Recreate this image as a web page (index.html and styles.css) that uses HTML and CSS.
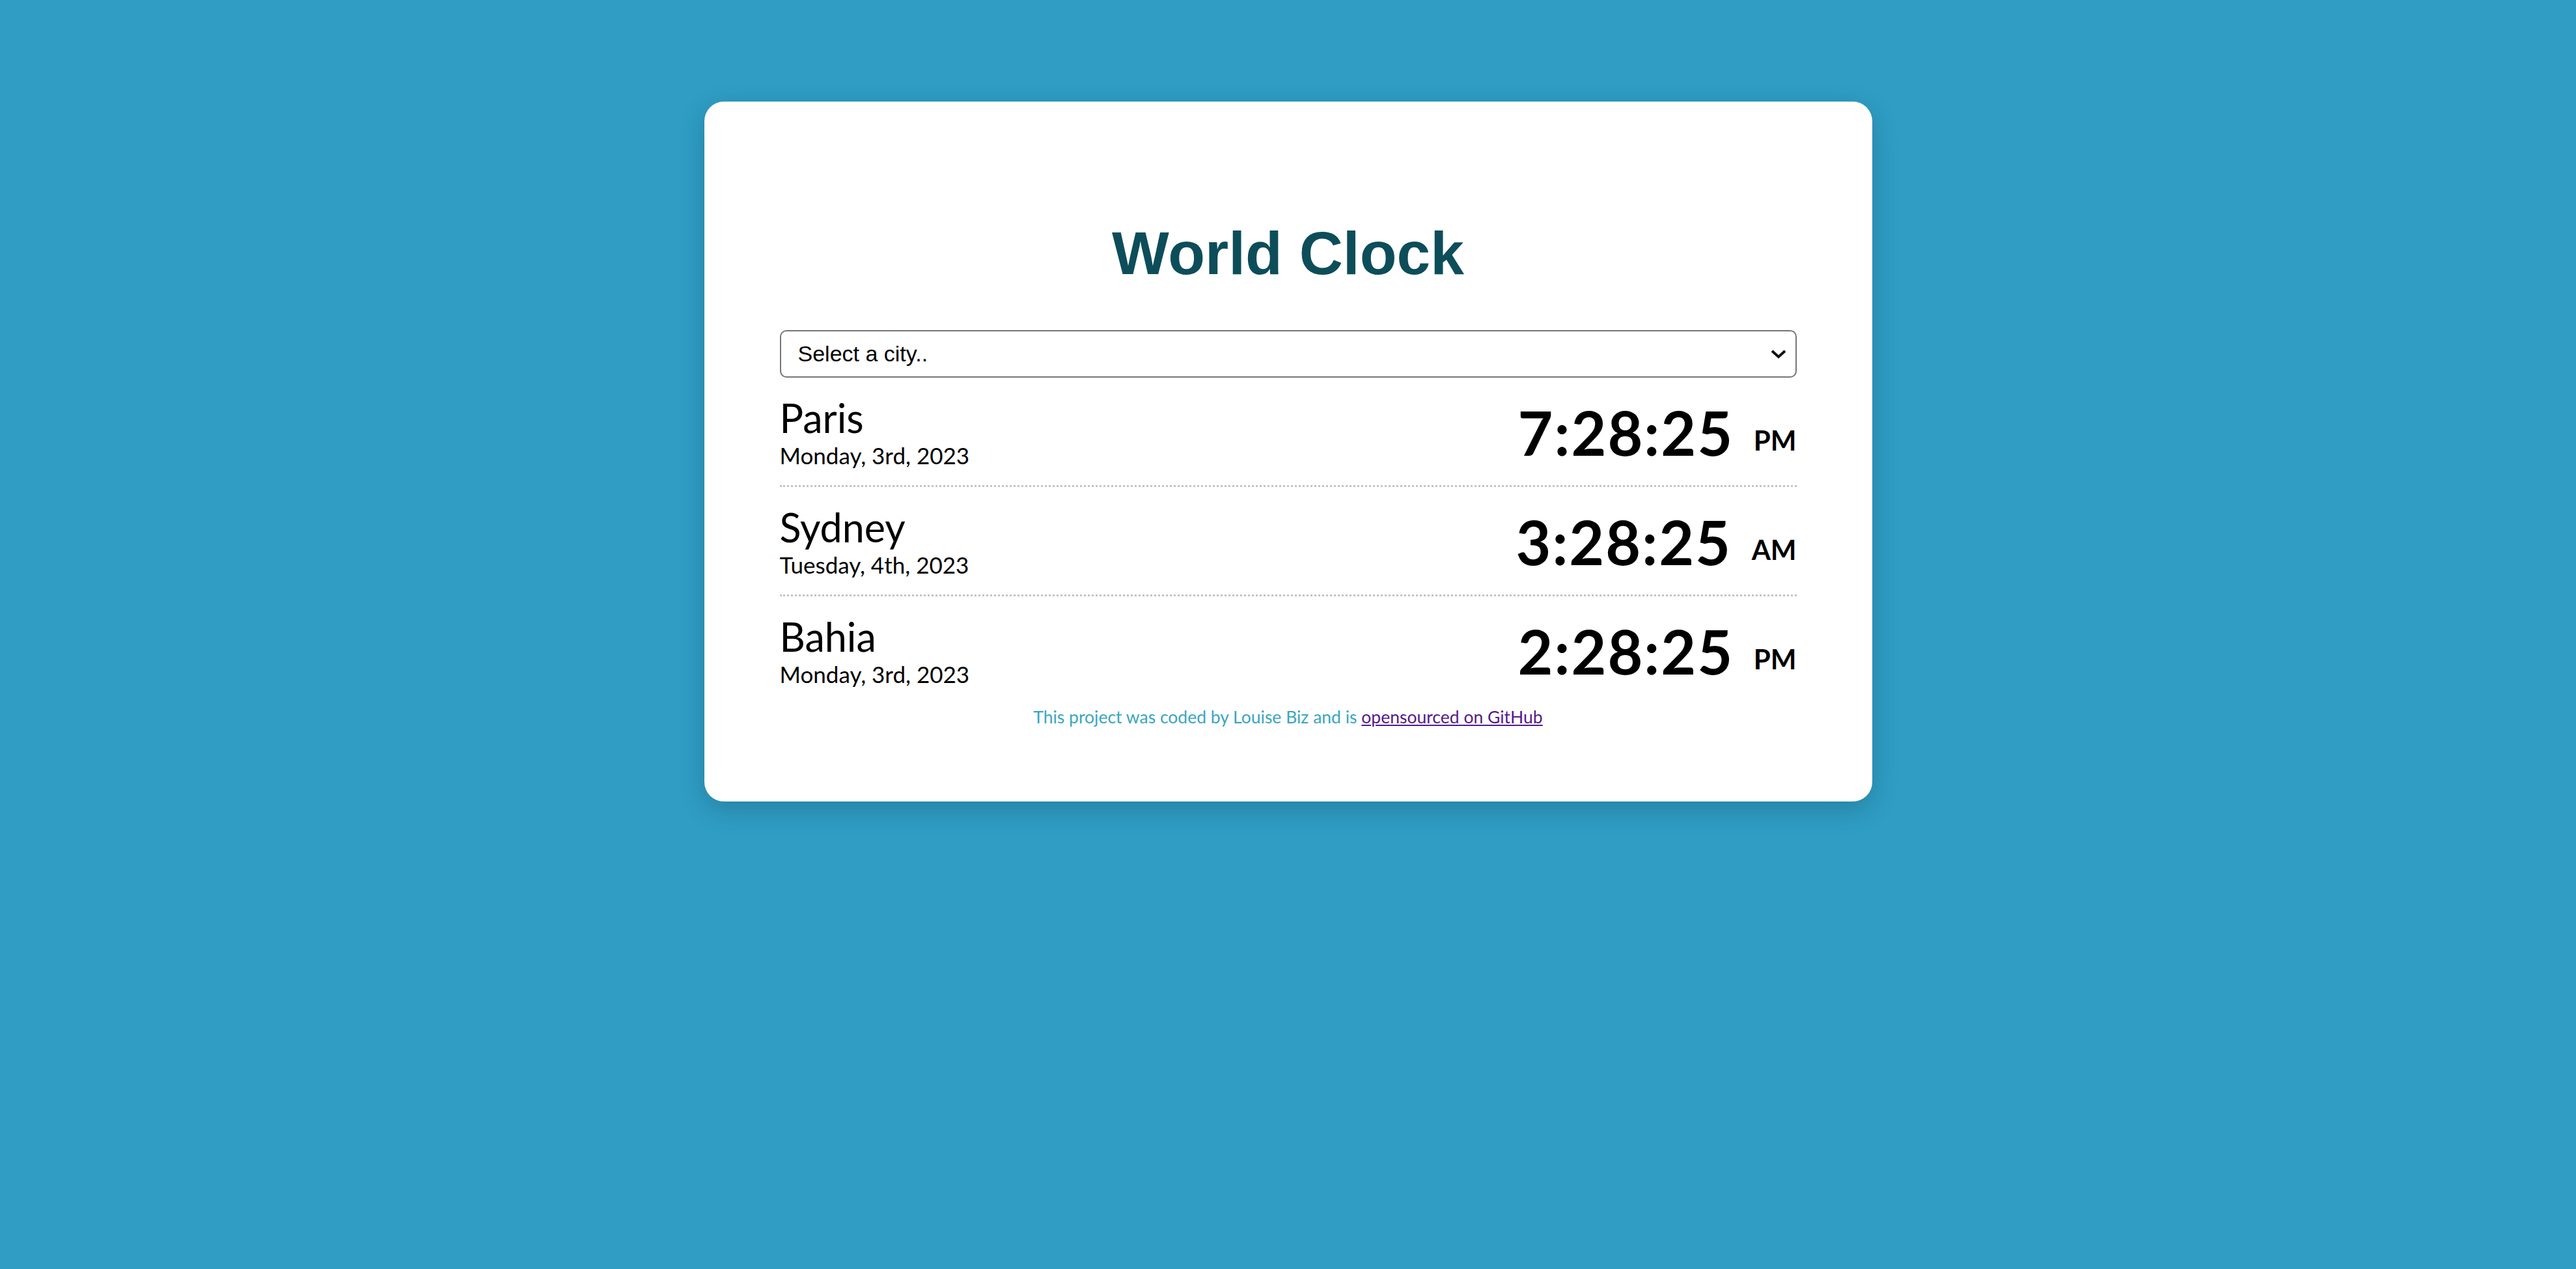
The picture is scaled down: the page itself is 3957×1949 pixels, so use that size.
FILE: index.html
```html
<!DOCTYPE html>
<html lang="en">
<head>
<meta charset="utf-8">
<title>World Clock</title>
<link rel="stylesheet" href="styles.css">
</head>
<body>
<div class="container">
  <h1 class="title">World Clock</h1>
  <div class="select-box">
    <span class="select-label">Select a city..</span>
    <svg class="chevron" viewBox="0 0 24 14" width="24" height="14"><path d="M2 2 L12 11 L22 2" fill="none" stroke="#111" stroke-width="4"/></svg>
  </div>
  <div class="cities">
    <div class="city">
      <div class="city-info">
        <div class="city-name">Paris</div>
        <div class="city-date">Monday, 3rd, 2023</div>
      </div>
      <div class="city-time">7:28:25 <small class="ampm">PM</small></div>
    </div>
    <div class="city">
      <div class="city-info">
        <div class="city-name">Sydney</div>
        <div class="city-date">Tuesday, 4th, 2023</div>
      </div>
      <div class="city-time">3:28:25 <small class="ampm">AM</small></div>
    </div>
    <div class="city last">
      <div class="city-info">
        <div class="city-name">Bahia</div>
        <div class="city-date">Monday, 3rd, 2023</div>
      </div>
      <div class="city-time">2:28:25 <small class="ampm">PM</small></div>
    </div>
  </div>
  <footer class="footer">This project was coded by Louise Biz and is <a class="footer-link" href="#">opensourced on GitHub</a></footer>
</div>
</body>
</html>
```
FILE: styles.css
```css
html, body {
  margin: 0;
  padding: 0;
}
body {
  background: #2f9dc4;
  font-family: Lato, "Open Sans", sans-serif;
  min-height: 1949px;
}
.container {
  box-sizing: border-box;
  width: 1794px;
  margin: 156px auto 0;
  padding: 180px 116px 113px;
  background: #ffffff;
  border-radius: 30px;
  box-shadow: 0 12px 40px rgba(0, 0, 0, 0.18);
}
.title {
  margin: 0;
  font-family: "Liberation Sans", Arial, sans-serif;
  font-weight: 700;
  font-size: 93px;
  line-height: 106px;
  color: #0d4d59;
  text-align: center;
}
.select-box {
  box-sizing: border-box;
  margin-top: 65px;
  height: 73px;
  border: 2px solid #767676;
  border-radius: 10px;
  display: flex;
  align-items: center;
  justify-content: space-between;
  padding: 0 14px 0 26px;
  font-family: "Liberation Sans", Arial, sans-serif;
  font-size: 34px;
  color: #000;
}
.chevron {
  display: block;
}
.city {
  display: flex;
  justify-content: space-between;
  align-items: center;
  padding: 29px 0 26px;
  border-bottom: 3px dotted #c4c4c4;
}
.city.last {
  border-bottom: none;
}
.city-name {
  font-size: 61px;
  line-height: 66px;
  color: #000;
}
.city-date {
  margin-top: 4px;
  font-size: 35px;
  line-height: 40px;
  color: #000;
}
.city-time {
  font-size: 93px;
  font-weight: 700;
  line-height: 1;
  color: #000;
  letter-spacing: 2px;
}
.ampm {
  font-size: 42px;
  margin-left: 6px;
  letter-spacing: 0;
  vertical-align: 8px;
}
.footer {
  margin-top: 3px;
  font-size: 26.5px;
  line-height: 34px;
  color: #3aa6c0;
  text-align: center;
}
.footer-link {
  color: #551a8b;
}
```
